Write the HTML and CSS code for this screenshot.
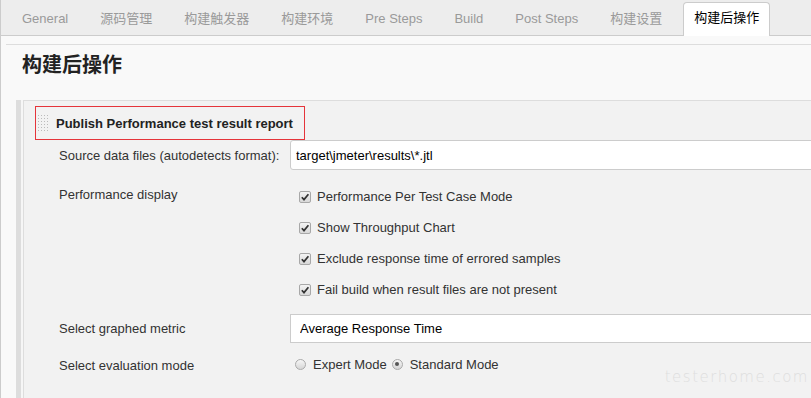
FILE: index.html
```html
<!DOCTYPE html>
<html lang="zh-CN">
<head>
  <meta charset="utf-8" />
  <title>构建后操作</title>
  <link rel="stylesheet" href="styles.css">
</head>
<body>
  <div class="page">
    <div class="tabs">
      <span class="tab">General</span>
      <span class="tab">源码管理</span>
      <span class="tab">构建触发器</span>
      <span class="tab">构建环境</span>
      <span class="tab">Pre Steps</span>
      <span class="tab">Build</span>
      <span class="tab">Post Steps</span>
      <span class="tab">构建设置</span>
      <span class="tab active">构建后操作</span>
    </div>

    <div class="content">
      <h1 class="title">构建后操作</h1>

      <div class="section">
        <div class="section-body">
          <div class="section-head">
            <span class="handle"></span>
            <b>Publish Performance test result report</b>
          </div>

          <div class="row">
            <div class="label label-mid">Source data files (autodetects format):</div>
            <div class="field">
              <input class="text" type="text" value="target\jmeter\results\*.jtl" />
            </div>
          </div>

          <div class="row row-checks">
            <div class="label label-top">Performance display</div>
            <div class="field checks">
              <div class="check">
                <span class="box"><svg width="10" height="10" viewBox="0 0 10 10"><path d="M1.8 5.2 L4 7.6 L8.4 2.2" fill="none" stroke="#333" stroke-width="1.7"/></svg></span>
                Performance Per Test Case Mode
              </div>
              <div class="check">
                <span class="box"><svg width="10" height="10" viewBox="0 0 10 10"><path d="M1.8 5.2 L4 7.6 L8.4 2.2" fill="none" stroke="#333" stroke-width="1.7"/></svg></span>
                Show Throughput Chart
              </div>
              <div class="check">
                <span class="box"><svg width="10" height="10" viewBox="0 0 10 10"><path d="M1.8 5.2 L4 7.6 L8.4 2.2" fill="none" stroke="#333" stroke-width="1.7"/></svg></span>
                Exclude response time of errored samples
              </div>
              <div class="check">
                <span class="box"><svg width="10" height="10" viewBox="0 0 10 10"><path d="M1.8 5.2 L4 7.6 L8.4 2.2" fill="none" stroke="#333" stroke-width="1.7"/></svg></span>
                Fail build when result files are not present
              </div>
            </div>
          </div>

          <div class="row row-select">
            <div class="label label-mid">Select graphed metric</div>
            <div class="field">
              <select class="select">
                <option>Average Response Time</option>
              </select>
            </div>
          </div>

          <div class="row row-radios">
            <div class="label label-mid">Select evaluation mode</div>
            <div class="field radios">
              <span class="radio"></span><span class="radio-text">Expert Mode</span>
              <span class="radio checked"></span><span class="radio-text">Standard Mode</span>
            </div>
          </div>
        </div>
      </div>
    </div>

    <div class="watermark">testerhome.com</div>
  </div>
</body>
</html>
```

FILE: styles.css
```css
html, body {
  margin: 0;
  padding: 0;
  overflow: hidden;
}
body {
  font-family: "Liberation Sans", Arial, "Noto Sans CJK SC", sans-serif;
  font-size: 13px;
  color: #333;
  background: #f9f9f9;
}
.page {
  position: relative;
  height: 398px;
  border-left: 1px solid #ccc;
  overflow: hidden;
}

/* barra de abas */
.tabs {
  display: flex;
  align-items: flex-end;
  height: 35px;
  padding-left: 10px;
  background: #ededed;
  border-bottom: 1px solid #ccc;
}
.tab {
  height: 32px;
  line-height: 32px;
  padding: 0 10px;
  margin-right: 10px;
  border: 1px solid transparent;
  border-bottom: none;
  color: #9a9a9a;
  white-space: nowrap;
}
.tab.active {
  height: 33px;
  line-height: 30px;
  margin-bottom: -1px;
  background: #fff;
  color: #000;
  border-color: #ccc;
  border-radius: 4px 4px 0 0;
}

.content {
  margin: 8px 0 0 5px;
  border-top: 1px solid #ddd;
}
.title {
  margin: 6px 0 0;
  padding-left: 16px;
  font-size: 20px;
  line-height: 28px;
  font-weight: bold;
  color: #222;
}

/* bloco do plugin */
.section {
  margin: 21px 0 0 10px;
  border-left: 5px solid #ddd;
  padding-left: 2px;
  background: #f6f6f6;
}
.section-body {
  border-left: 1px solid #ddd;
  border-top: 1px solid #ddd;
  background: #f2f2f2;
  height: 297px;
}
.section-head {
  display: flex;
  align-items: center;
  width: 268px;
  height: 32px;
  margin: 5px 0 0 11px;
  border: 1px solid #e5343a;
  color: #222;
}
.handle {
  width: 12px;
  height: 18px;
  margin: 0 7px 0 1px;
  background-image: radial-gradient(circle, #bbb 0.8px, transparent 1px);
  background-size: 3px 3px;
}

.row {
  display: flex;
}
.label {
  width: 231px;
  padding-left: 35px;
  flex-shrink: 0;
}
.label-mid {
  align-self: center;
}
.label-top {
  padding-top: 6px;
  line-height: 16px;
}
.field {
  flex: 1;
  min-width: 0;
}
.text {
  box-sizing: border-box;
  width: 600px;
  height: 30px;
  padding: 0 5px;
  border: 1px solid #ccc;
  border-radius: 3px;
  background: #fff;
  font-family: inherit;
  font-size: 13px;
  color: #000;
}

.row-checks {
  margin-top: 11px;
}
.checks {
  padding-left: 9px;
}
.check {
  display: flex;
  align-items: center;
  height: 31px;
  color: #333;
}
.box {
  box-sizing: border-box;
  display: inline-flex;
  align-items: center;
  justify-content: center;
  width: 12px;
  height: 12px;
  margin-right: 6px;
  border: 1px solid #a8a8a8;
  border-radius: 2px;
  background: linear-gradient(#f4f4f4, #d8d8d8);
}

.row-select {
  margin-top: 9px;
}
.select {
  box-sizing: border-box;
  width: 600px;
  height: 29px;
  padding: 0 9px;
  border: 1px solid #ccc;
  border-radius: 0;
  background: #fff;
  font-family: inherit;
  font-size: 13px;
  color: #000;
  appearance: none;
  -webkit-appearance: none;
}

.row-radios {
  margin-top: 11px;
  height: 22px;
}
.radios {
  display: flex;
  align-items: center;
  padding-left: 5px;
  margin-top: -2px;
}
.radio {
  box-sizing: border-box;
  position: relative;
  width: 11px;
  height: 11px;
  margin-right: 7px;
  border: 1px solid #aaa;
  border-radius: 50%;
  background: linear-gradient(#f6f6f6, #d6d6d6);
}
.radio.checked::after {
  content: "";
  position: absolute;
  left: 2.5px;
  top: 2.5px;
  width: 4px;
  height: 4px;
  border-radius: 50%;
  background: #555;
}
.radio-text {
  margin-right: 5px;
}

.watermark {
  position: absolute;
  right: 2px;
  bottom: 12px;
  font-family: "DejaVu Sans", sans-serif;
  font-size: 15px;
  font-weight: 300;
  letter-spacing: 1.5px;
  color: #dedede;
}
```
